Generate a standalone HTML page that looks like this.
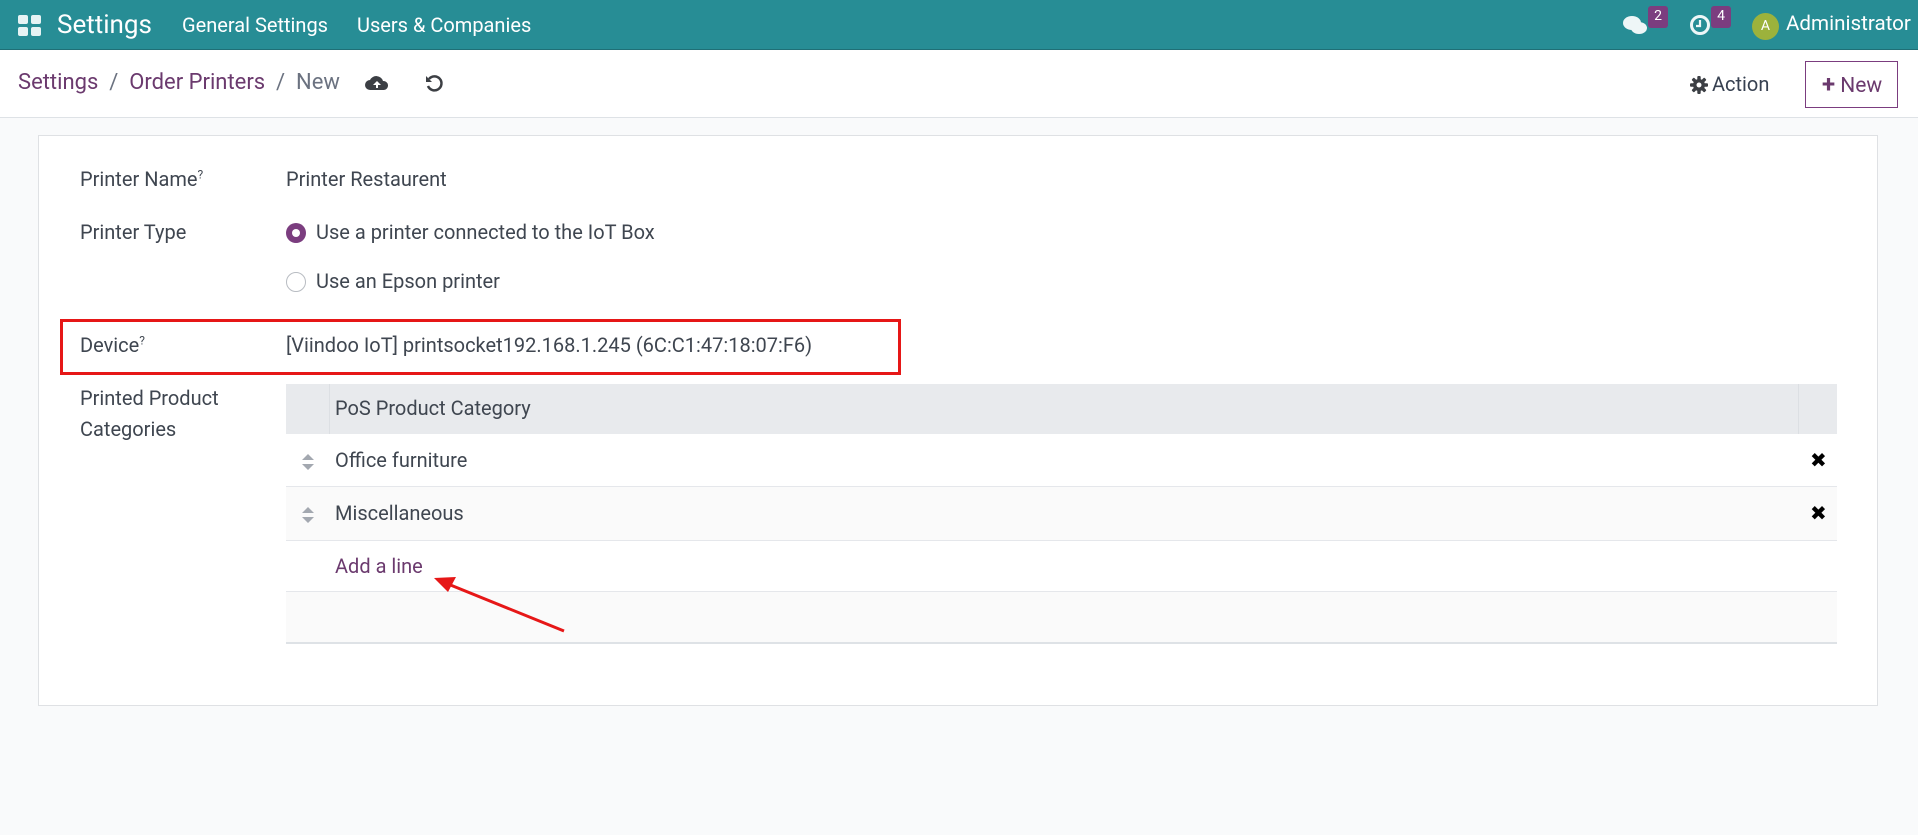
<!DOCTYPE html>
<html><head><meta charset="utf-8"><style>
*{box-sizing:border-box;margin:0;padding:0}
body{width:1918px;height:835px;background:#f9fafb;font-family:"Roboto","Liberation Sans",sans-serif;color:#3f4650;position:relative;overflow:hidden;font-size:20px}
.nav{position:absolute;left:0;top:0;width:1918px;height:50px;background:#278d95;color:#fff;border-bottom:1px solid #1f6f76}
.a{position:absolute;white-space:nowrap}
.bc{position:absolute;left:0;top:50px;width:1918px;height:68px;background:#fff;border-bottom:1px solid #dee2e6}
.card{position:absolute;left:38px;top:135px;width:1840px;height:571px;background:#fff;border:1px solid #dfe1e4}
.row{position:absolute;left:286px;width:1551px;border-bottom:1px solid #e5e7eb}
.badge{position:absolute;background:#7b3d7f;color:#fff;font-size:14px;text-align:center;border-radius:3px;width:20px;height:22px;line-height:20px}
.srt{position:absolute;left:300px;width:16px;height:20px}
</style></head><body>
<div class="nav">
 <svg class="a" style="left:18px;top:15px" width="24" height="22"><rect x="0" y="0" width="10" height="9" rx="2" fill="#e6f3f4"/><rect x="13" y="0" width="10" height="9" rx="2" fill="#e6f3f4"/><rect x="0" y="12" width="10" height="9" rx="2" fill="#e6f3f4"/><rect x="13" y="12" width="10" height="9" rx="2" fill="#e6f3f4"/></svg>
 <div class="a" style="left:57px;top:10px;font-size:26px">Settings</div>
 <div class="a" style="left:182px;top:13px;font-size:20px">General Settings</div>
 <div class="a" style="left:357px;top:13px;font-size:20px">Users &amp; Companies</div>
 <svg class="a" style="left:1622px;top:15px" width="28" height="22"><ellipse cx="10" cy="8" rx="9" ry="7" fill="#eef6f7"/><ellipse cx="17" cy="13" rx="8" ry="6" fill="#eef6f7"/></svg>
 <div class="badge" style="left:1648px;top:6px">2</div>
 <svg class="a" style="left:1689px;top:14px" width="22" height="22"><circle cx="11" cy="11" r="8.5" fill="none" stroke="#eef6f7" stroke-width="3"/><path d="M11 6v6h-4" stroke="#eef6f7" stroke-width="2.2" fill="none"/></svg>
 <div class="badge" style="left:1711px;top:6px">4</div>
 <div class="a" style="left:1752px;top:13px;width:27px;height:27px;border-radius:50%;background:#9cb23c;font-size:14px;text-align:center;line-height:27px">A</div>
 <div class="a" style="left:1786px;top:12px;font-size:20.6px">Administrator</div>
</div>
<div class="bc">
 <div class="a" style="left:18px;top:20px;font-size:22px;color:#6b3a6e">Settings <span style="color:#6b7280">&nbsp;/&nbsp;</span> Order Printers <span style="color:#6b7280">&nbsp;/&nbsp; New</span></div>
 <svg class="a" style="left:365px;top:24px" width="24" height="18"><path d="M5 16a5 5 0 0 1 0-10a7 7 0 0 1 13 1a4.5 4.5 0 0 1 1 9z" fill="#3c3f44"/><path d="M12 7l-4 4h3v3h2v-3h3z" fill="#fff"/></svg>
 <svg class="a" style="left:424px;top:24px" width="20" height="20"><path d="M5 5A7 7 0 1 1 4 12" fill="none" stroke="#3c3f44" stroke-width="2.5"/><path d="M2 2v6h6z" fill="#3c3f44"/></svg>
 <svg class="a" style="left:1690px;top:26px" width="18" height="18" viewBox="0 0 18 18"><g fill="#3c3f44"><circle cx="9" cy="9" r="6"/><rect x="7.3" y="0" width="3.4" height="18" rx="1"/><rect x="0" y="7.3" width="18" height="3.4" rx="1"/><rect x="7.3" y="0" width="3.4" height="18" rx="1" transform="rotate(45 9 9)"/><rect x="7.3" y="0" width="3.4" height="18" rx="1" transform="rotate(-45 9 9)"/></g><circle cx="9" cy="9" r="2.5" fill="#fff"/></svg>
 <div class="a" style="left:1712px;top:22px;font-size:20px;color:#374151">Action</div>
 <div class="a" style="left:1805px;top:11px;width:93px;height:47px;border:1px solid #7b3d7f;color:#6b3a6e;font-size:21px;line-height:45px;padding-left:16px"><b style="font-size:24px">+</b> New</div>
</div>
<div class="card"></div>
<div class="a" style="left:80px;top:167px">Printer Name<sup style="font-size:12px">?</sup></div>
<div class="a" style="left:286px;top:167px">Printer Restaurent</div>
<div class="a" style="left:80px;top:220px">Printer Type</div>
<div class="a" style="left:286px;top:223px;width:20px;height:20px;border-radius:50%;background:#7b3d7f"><div style="margin:6px;width:8px;height:8px;border-radius:50%;background:#fff"></div></div>
<div class="a" style="left:316px;top:220px">Use a printer connected to the IoT Box</div>
<div class="a" style="left:286px;top:272px;width:20px;height:20px;border-radius:50%;border:1px solid #b8bcc2"></div>
<div class="a" style="left:316px;top:269px">Use an Epson printer</div>
<div class="a" style="left:60px;top:319px;width:841px;height:56px;border:3px solid #e61717"></div>
<div class="a" style="left:80px;top:333px">Device<sup style="font-size:12px">?</sup></div>
<div class="a" style="left:286px;top:333px">[Viindoo IoT] printsocket192.168.1.245 (6C:C1:47:18:07:F6)</div>
<div class="a" style="left:80px;top:383px;line-height:31px">Printed Product<br>Categories</div>
<div class="row" style="top:384px;height:50px;background:#e8eaed;border:none"></div>
<div class="a" style="left:329px;top:384px;width:1px;height:50px;background:#dcdfe3"></div>
<div class="a" style="left:1798px;top:384px;width:1px;height:50px;background:#dcdfe3"></div>
<div class="a" style="left:335px;top:396px">PoS Product Category</div>
<div class="row" style="top:434px;height:53px"></div>
<svg class="srt" style="top:452px" viewBox="0 0 16 20"><path d="M2 8L8 2L14 8z M2 12L8 18L14 12z" fill="#a3a8b0"/></svg>
<div class="a" style="left:335px;top:448px">Office furniture</div>
<div class="a" style="left:1810px;top:448px;font-size:20px;color:#000">✖</div>
<div class="row" style="top:487px;height:54px;background:#fafafa"></div>
<svg class="srt" style="top:505px" viewBox="0 0 16 20"><path d="M2 8L8 2L14 8z M2 12L8 18L14 12z" fill="#a3a8b0"/></svg>
<div class="a" style="left:335px;top:501px">Miscellaneous</div>
<div class="a" style="left:1810px;top:501px;font-size:20px;color:#000">✖</div>
<div class="row" style="top:541px;height:51px"></div>
<div class="a" style="left:335px;top:554px;color:#6b3a6e">Add a line</div>
<div class="row" style="top:592px;height:52px;background:#fafafa;border-bottom:2px solid #dee2e6"></div>
<svg class="a" style="left:0;top:0" width="1918" height="835"><line x1="564" y1="631" x2="448" y2="584" stroke="#e61717" stroke-width="3"/><path d="M434 578l22-1l-8 15z" fill="#e61717"/></svg>
</body></html>
